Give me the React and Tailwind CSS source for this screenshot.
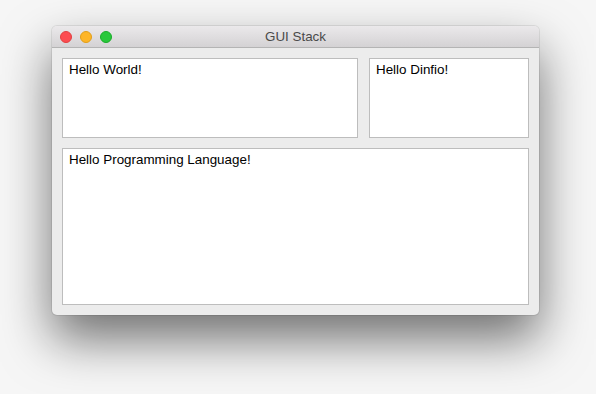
export default function App() {
  return (
    <div className="w-[596px] h-[394px] bg-[#f6f6f6] pt-[26px] pl-[52px] overflow-hidden" style={{ fontFamily: '"Liberation Sans", Arial, sans-serif' }}>
      <div className="w-[487px] h-[289px] rounded-[5px] bg-[#ececec] shadow-[0_24px_50px_rgba(0,0,0,0.55),0_0_0_1px_rgba(0,0,0,0.08)] flex flex-col overflow-hidden">
        <div className="relative h-[22px] bg-gradient-to-b from-[#ebe9eb] to-[#d4d2d4] border-b border-[#b4b4b4] flex items-center justify-center">
          <div className="absolute left-[8px] top-[5px] flex gap-[8px]">
            <span className="w-[12px] h-[12px] rounded-full bg-[#fc4c51] border border-[#e0403f]" />
            <span className="w-[12px] h-[12px] rounded-full bg-[#fdb528] border border-[#e09e1a]" />
            <span className="w-[12px] h-[12px] rounded-full bg-[#29c83b] border border-[#1aab29]" />
          </div>
          <span className="text-[13.4px] text-[#4a4a4a] leading-none">GUI Stack</span>
        </div>
        <div className="flex-1 flex flex-col gap-[10px] pt-[10px] pb-[10px] px-[10px]">
          <div className="flex gap-[11px] h-[80px]">
            <div className="flex-1 bg-white border border-[#bdbdbd] px-[6px] pt-[3px] text-[13.4px] text-black leading-[16px]">Hello World!</div>
            <div className="w-[160px] bg-white border border-[#bdbdbd] px-[6px] pt-[3px] text-[13.4px] text-black leading-[16px]">Hello Dinfio!</div>
          </div>
          <div className="flex-1 bg-white border border-[#bdbdbd] px-[6px] pt-[3px] text-[13.4px] text-black leading-[16px]">Hello Programming Language!</div>
        </div>
      </div>
    </div>
  );
}
